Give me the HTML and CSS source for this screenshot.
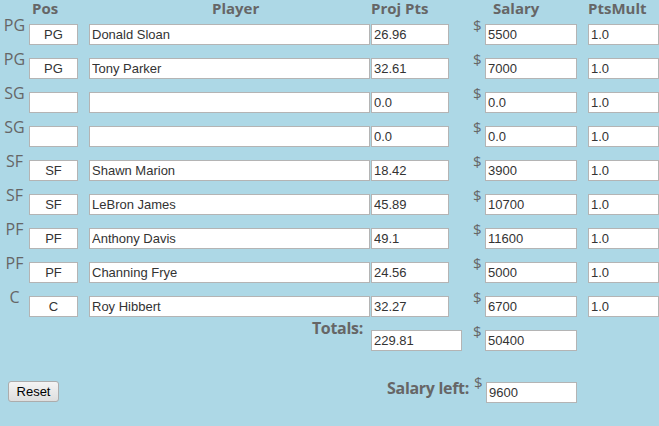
FILE: index.html
```html
<!DOCTYPE html>
<html>
<head>
    <title>Lineup</title>
    <meta charset="UTF-8">
    <link rel="stylesheet" href="styles.css">
</head>
<body>
    <div class="lineup">
        <div class="head"></div>
        <div class="head head-pos">Pos</div>
        <div class="head head-player">Player</div>
        <div class="head">Proj Pts</div>
        <div class="head head-salary">Salary</div>
        <div class="head">PtsMult</div>

        <div class="slot">PG</div>
        <div class="cell"><input class="pos" type="text" value="PG"></div>
        <div class="cell"><input class="player" type="text" value="Donald Sloan"></div>
        <div class="cell"><input class="pts" type="text" value="26.96"></div>
        <div class="cell money"><span class="dollar">$</span><input class="salary" type="text" value="5500"></div>
        <div class="cell"><input class="mult" type="text" value="1.0"></div>

        <div class="slot">PG</div>
        <div class="cell"><input class="pos" type="text" value="PG"></div>
        <div class="cell"><input class="player" type="text" value="Tony Parker"></div>
        <div class="cell"><input class="pts" type="text" value="32.61"></div>
        <div class="cell money"><span class="dollar">$</span><input class="salary" type="text" value="7000"></div>
        <div class="cell"><input class="mult" type="text" value="1.0"></div>

        <div class="slot">SG</div>
        <div class="cell"><input class="pos" type="text" value=""></div>
        <div class="cell"><input class="player" type="text" value=""></div>
        <div class="cell"><input class="pts" type="text" value="0.0"></div>
        <div class="cell money"><span class="dollar">$</span><input class="salary" type="text" value="0.0"></div>
        <div class="cell"><input class="mult" type="text" value="1.0"></div>

        <div class="slot">SG</div>
        <div class="cell"><input class="pos" type="text" value=""></div>
        <div class="cell"><input class="player" type="text" value=""></div>
        <div class="cell"><input class="pts" type="text" value="0.0"></div>
        <div class="cell money"><span class="dollar">$</span><input class="salary" type="text" value="0.0"></div>
        <div class="cell"><input class="mult" type="text" value="1.0"></div>

        <div class="slot">SF</div>
        <div class="cell"><input class="pos" type="text" value="SF"></div>
        <div class="cell"><input class="player" type="text" value="Shawn Marion"></div>
        <div class="cell"><input class="pts" type="text" value="18.42"></div>
        <div class="cell money"><span class="dollar">$</span><input class="salary" type="text" value="3900"></div>
        <div class="cell"><input class="mult" type="text" value="1.0"></div>

        <div class="slot">SF</div>
        <div class="cell"><input class="pos" type="text" value="SF"></div>
        <div class="cell"><input class="player" type="text" value="LeBron James"></div>
        <div class="cell"><input class="pts" type="text" value="45.89"></div>
        <div class="cell money"><span class="dollar">$</span><input class="salary" type="text" value="10700"></div>
        <div class="cell"><input class="mult" type="text" value="1.0"></div>

        <div class="slot">PF</div>
        <div class="cell"><input class="pos" type="text" value="PF"></div>
        <div class="cell"><input class="player" type="text" value="Anthony Davis"></div>
        <div class="cell"><input class="pts" type="text" value="49.1"></div>
        <div class="cell money"><span class="dollar">$</span><input class="salary" type="text" value="11600"></div>
        <div class="cell"><input class="mult" type="text" value="1.0"></div>

        <div class="slot">PF</div>
        <div class="cell"><input class="pos" type="text" value="PF"></div>
        <div class="cell"><input class="player" type="text" value="Channing Frye"></div>
        <div class="cell"><input class="pts" type="text" value="24.56"></div>
        <div class="cell money"><span class="dollar">$</span><input class="salary" type="text" value="5000"></div>
        <div class="cell"><input class="mult" type="text" value="1.0"></div>

        <div class="slot">C</div>
        <div class="cell"><input class="pos" type="text" value="C"></div>
        <div class="cell"><input class="player" type="text" value="Roy Hibbert"></div>
        <div class="cell"><input class="pts" type="text" value="32.27"></div>
        <div class="cell money"><span class="dollar">$</span><input class="salary" type="text" value="6700"></div>
        <div class="cell"><input class="mult" type="text" value="1.0"></div>

        <div class="totals-label">Totals:</div>
        <div class="cell"><input class="pts-total" type="text" value="229.81"></div>
        <div class="cell money"><span class="dollar">$</span><input class="salary" type="text" value="50400"></div>
        <div></div>
    </div>

    <div class="footer">
        <button class="reset">Reset</button>
        <span class="left-label">Salary left:</span>
        <span class="dollar">$</span>
        <input class="salary-left" type="text" value="9600">
    </div>
</body>
</html>
```

FILE: styles.css
```css
/* fundo azul claro, tudo em cinza */
body {
    margin: 0;
    background-color: #add8e6;
    font-family: "Open Sans", sans-serif;
    color: #666;
}
.lineup {
    display: grid;
    grid-template-columns: 29px 60px 282px 102px 115px 71px;
    grid-template-rows: 14px repeat(10, 34px);
}
.head {
    font-size: 15px;
    font-weight: bold;
    line-height: 17px;
    white-space: nowrap;
}
.head-pos {
    padding-left: 3px;
}
.head-player {
    padding-left: 123px;
}
.head-salary {
    padding-left: 20px;
}
.slot {
    font-size: 16px;
    text-align: center;
}
.cell {
    display: flex;
    align-items: flex-start;
}
.dollar {
    font-size: 15px;
    line-height: 20px;
    width: 12px;
    margin-top: 1px;
}
input {
    box-sizing: border-box;
    height: 21px;
    margin: 10px 0 0 0;
    padding: 1px 2px;
    border: 1px solid #b4b4b4;
    background: #fff;
    font-family: "Liberation Sans", Arial, sans-serif;
    font-size: 13px;
    color: #333;
}
.pos { width: 49px; text-align: center; }
.player { width: 281px; }
.pts { width: 78px; }
.pts-total { width: 91px; }
.salary { width: 92px; }
.mult { width: 71px; }
.totals-label {
    grid-column: 1 / 4;
    text-align: right;
    padding-right: 8px;
    font-size: 16px;
    font-weight: bold;
    letter-spacing: -0.3px;
    margin-top: -3px;
}
.footer {
    display: flex;
    align-items: flex-start;
    margin-top: 18px;
    padding-left: 8px;
}
.reset {
    box-sizing: border-box;
    width: 51px;
    height: 21px;
    margin-top: 9px;
    padding: 0;
    border: 1px solid #acacac;
    border-radius: 3px;
    background: linear-gradient(#f4f4f4, #dedede);
    font-family: "Liberation Sans", Arial, sans-serif;
    font-size: 13px;
    color: #000;
}
.left-label {
    margin-left: auto;
    margin-top: 5px;
    margin-right: 5px;
    font-size: 16px;
    font-weight: bold;
    letter-spacing: -0.3px;
}
.footer .dollar {
    margin-top: 0;
}
.salary-left {
    width: 91px;
    margin-right: 82px;
}
```
